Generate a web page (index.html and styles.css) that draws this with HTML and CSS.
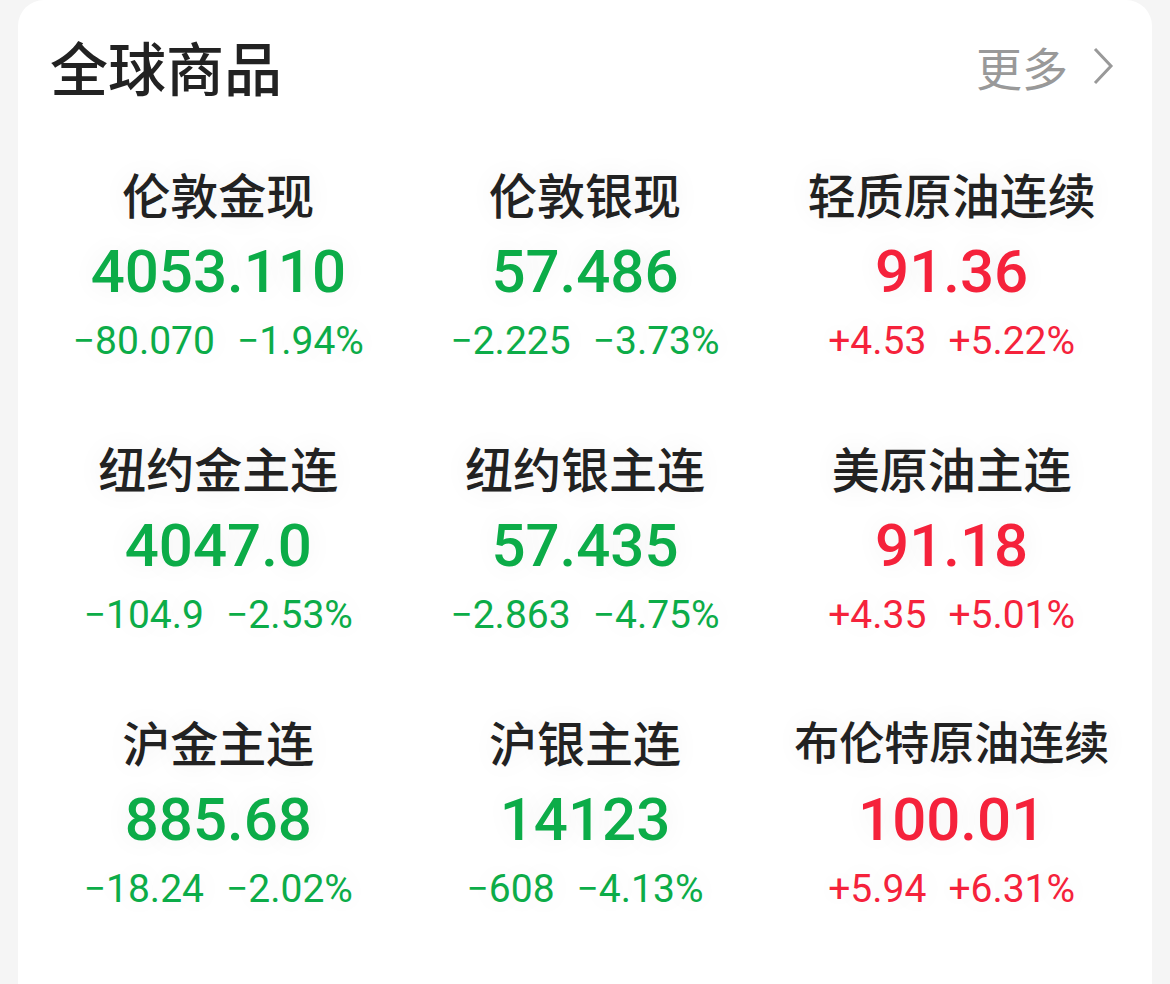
FILE: index.html
```html
<!DOCTYPE html>
<html>

<head>
    <meta charset="utf-8">
    <meta name="viewport" content="width=device-width, initial-scale=1, user-scalable=no">
    <title>全球商品</title>
    <link rel="stylesheet" href="styles.css">
</head>

<body>
    <div class="card">
        <div class="card-header">
            <h2 class="card-title">全球商品</h2>
            <a class="more-link" href="#">
                <span>更多</span>
                <svg class="more-arrow" viewBox="0 0 22 40" width="22" height="40">
                    <path d="M3 3 L19 20 L3 37" fill="none" stroke="#999" stroke-width="3" />
                </svg>
            </a>
        </div>

        <div class="quote-grid">
            <div class="quote">
                <p class="quote-name">伦敦金现</p>
                <p class="quote-price down">4053.110</p>
                <p class="quote-change down"><span>−80.070</span><span>−1.94%</span></p>
            </div>
            <div class="quote">
                <p class="quote-name">伦敦银现</p>
                <p class="quote-price down">57.486</p>
                <p class="quote-change down"><span>−2.225</span><span>−3.73%</span></p>
            </div>
            <div class="quote">
                <p class="quote-name">轻质原油连续</p>
                <p class="quote-price up">91.36</p>
                <p class="quote-change up"><span>+4.53</span><span>+5.22%</span></p>
            </div>

            <div class="quote">
                <p class="quote-name">纽约金主连</p>
                <p class="quote-price down">4047.0</p>
                <p class="quote-change down"><span>−104.9</span><span>−2.53%</span></p>
            </div>
            <div class="quote">
                <p class="quote-name">纽约银主连</p>
                <p class="quote-price down">57.435</p>
                <p class="quote-change down"><span>−2.863</span><span>−4.75%</span></p>
            </div>
            <div class="quote">
                <p class="quote-name">美原油主连</p>
                <p class="quote-price up">91.18</p>
                <p class="quote-change up"><span>+4.35</span><span>+5.01%</span></p>
            </div>

            <div class="quote">
                <p class="quote-name">沪金主连</p>
                <p class="quote-price down">885.68</p>
                <p class="quote-change down"><span>−18.24</span><span>−2.02%</span></p>
            </div>
            <div class="quote">
                <p class="quote-name">沪银主连</p>
                <p class="quote-price down">14123</p>
                <p class="quote-change down"><span>−608</span><span>−4.13%</span></p>
            </div>
            <div class="quote">
                <p class="quote-name long">布伦特原油连续</p>
                <p class="quote-price up">100.01</p>
                <p class="quote-change up"><span>+5.94</span><span>+6.31%</span></p>
            </div>
        </div>
    </div>
</body>

</html>
```

FILE: styles.css
```css
body {
    margin: 0;
    padding: 0 18px;
    background-color: #f5f5f5;
    font-family: "Noto Sans CJK SC", "Noto Sans", sans-serif;
    color: #222;
}

p {
    margin: 0;
}

.card {
    background-color: #fff;
    border-radius: 26px 26px 0 0;
    padding: 26px 17px 120px;
}

.card-header {
    display: flex;
    align-items: center;
    justify-content: space-between;
    padding: 0 21px 0 15px;
    height: 80px;
}

.card-title {
    margin: 0;
    font-size: 58px;
    font-weight: 500;
    line-height: 80px;
    color: #222;
}

.more-link {
    display: flex;
    align-items: center;
    gap: 24px;
    color: #999;
    font-size: 46px;
    text-decoration: none;
}

.more-arrow {
    display: block;
}

.quote-grid {
    display: grid;
    grid-template-columns: repeat(3, 1fr);
    row-gap: 71px;
    margin-top: 57px;
}

.quote {
    text-align: center;
}

.quote p {
    text-shadow: 0 0 28px rgba(0, 0, 0, 0.07);
}

.quote-name {
    font-size: 48px;
    font-weight: 500;
    line-height: 60px;
    color: #222;
}

/* names that would overflow the column get a smaller size */
.quote-name.long {
    font-size: 45px;
}

.quote-price {
    margin-top: 14px;
    font-family: Roboto, "Noto Sans", sans-serif;
    font-size: 60px;
    font-weight: 500;
    line-height: 70px;
}

.quote-change {
    margin-top: 9px;
    font-family: Roboto, "Noto Sans", sans-serif;
    font-size: 39px;
    line-height: 50px;
}

.quote-change span + span {
    margin-left: 22px;
}

.up {
    color: #f5223b;
}

.down {
    color: #0cac48;
}
```
